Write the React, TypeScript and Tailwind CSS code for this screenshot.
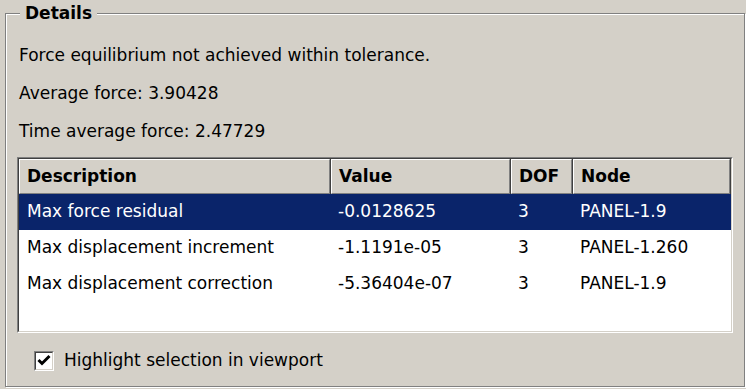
import React from 'react';

const rows = [
  { desc: 'Max force residual', value: '-0.0128625', dof: '3', node: 'PANEL-1.9', selected: true },
  { desc: 'Max displacement increment', value: '-1.1191e-05', dof: '3', node: 'PANEL-1.260', selected: false },
  { desc: 'Max displacement correction', value: '-5.36404e-07', dof: '3', node: 'PANEL-1.9', selected: false },
];

const cols = ['w-[312px]', 'w-[180px]', 'w-[62px]', 'w-[158px]'];

function HeaderCell({ label, width }: { label: string; width: string }) {
  return (
    <div className={`${width} h-[35px] shrink-0 border-r border-[#404040]`}>
      <div className="h-full border-t border-l border-t-white border-l-white border-r border-r-[#808080] border-b border-b-[#808080] flex items-center px-[7px] font-bold">
        {label}
      </div>
    </div>
  );
}

export default function App() {
  return (
    <div
      className="w-[746px] h-[389px] bg-[#d4d0c8] text-black text-[17px] overflow-hidden"
      style={{ fontFamily: '"DejaVu Sans", Verdana, sans-serif' }}
    >
      <fieldset className="ml-[5px] mt-[4px] w-[736px] h-[383px] border border-[#808080] shadow-[inset_1px_1px_0_#fff,1px_1px_0_#fff] px-[11px] pt-[15px]">
        <legend className="ml-[3px] px-[5px] leading-[18px] font-bold bg-[#d4d0c8]">Details</legend>

        <div className="h-[38px] flex items-center pl-[2px]">Force equilibrium not achieved within tolerance.</div>
        <div className="h-[38px] flex items-center pl-[2px]">Average force: 3.90428</div>
        <div className="h-[38px] flex items-center pl-[2px]">Time average force: 2.47729</div>

        <div className="mt-[6px] w-[716px] h-[176px] border border-t-[#808080] border-l-[#808080] border-b-white border-r-white">
          <div className="h-full border border-t-[#404040] border-l-[#404040] border-b-[#d4d0c8] border-r-[#d4d0c8] bg-white">
            <div className="flex bg-[#d4d0c8]">
              <HeaderCell label="Description" width={cols[0]} />
              <HeaderCell label="Value" width={cols[1]} />
              <HeaderCell label="DOF" width={cols[2]} />
              <HeaderCell label="Node" width={cols[3]} />
            </div>
            {rows.map((r) => (
              <div
                key={r.desc}
                className={`flex h-[36px] items-center ${r.selected ? 'bg-[#0a246a] text-white' : 'text-black'}`}
              >
                <div className={`${cols[0]} px-[8px]`}>{r.desc}</div>
                <div className={`${cols[1]} px-[7px]`}>{r.value}</div>
                <div className={`${cols[2]} px-[7px]`}>{r.dof}</div>
                <div className={`${cols[3]} px-[7px]`}>{r.node}</div>
              </div>
            ))}
          </div>
        </div>

        <div className="mt-[15px] flex items-center pl-[17px]">
          <div className="w-[20px] h-[20px] border border-t-[#808080] border-l-[#808080] border-b-white border-r-white">
            <div className="w-full h-full border border-t-[#404040] border-l-[#404040] border-b-[#d4d0c8] border-r-[#d4d0c8] bg-white flex items-center justify-center">
              <svg width="14" height="14" viewBox="0 0 14 14">
                <path d="M1.5 6 L5 9.5 L12.5 2" fill="none" stroke="#000" strokeWidth="3" strokeLinecap="butt" strokeLinejoin="miter" />
              </svg>
            </div>
          </div>
          <span className="ml-[10px]">Highlight selection in viewport</span>
        </div>
      </fieldset>
    </div>
  );
}
